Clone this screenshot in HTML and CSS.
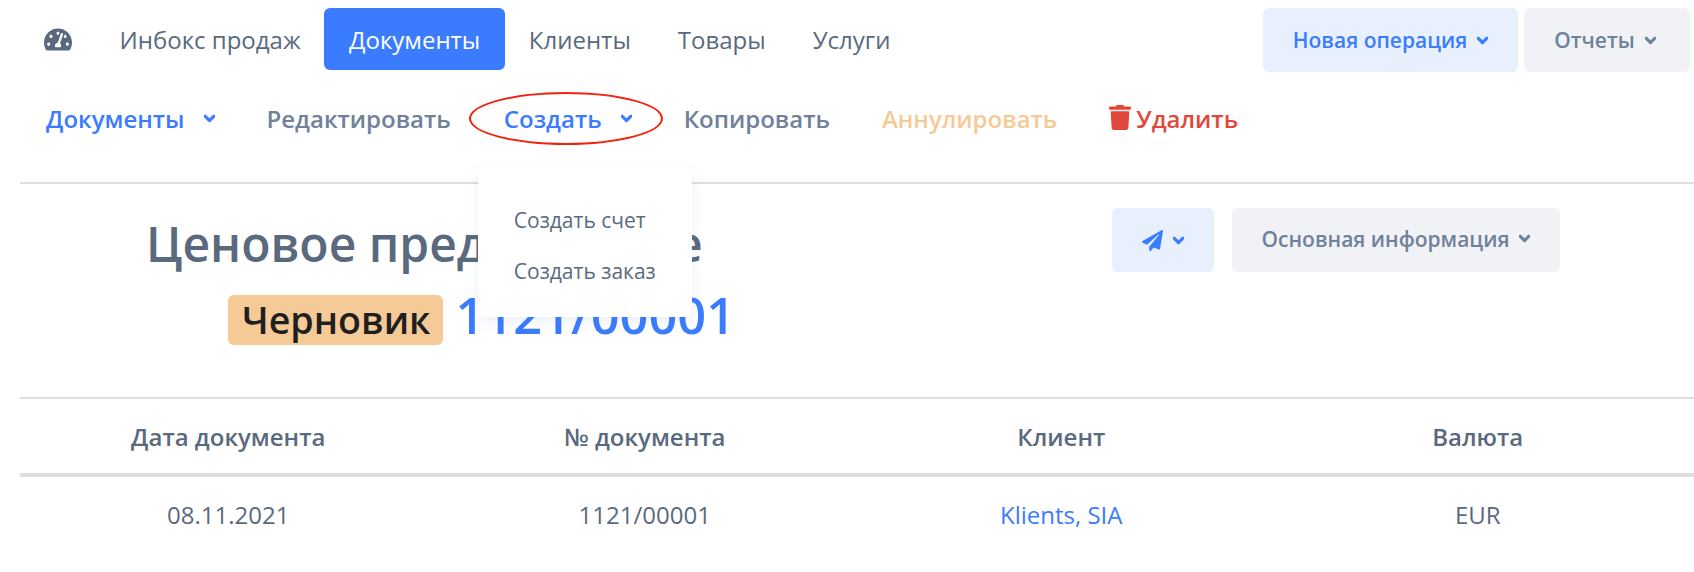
FILE: index.html
```html
<!DOCTYPE html>
<html lang="ru">
<head>
<meta charset="utf-8">
<title>Ценовое предложение</title>
<link rel="stylesheet" href="styles.css">
</head>
<body>
<svg class="sprite" aria-hidden="true">
  <symbol id="chev" viewBox="0 0 448 512"><path d="M207.029 381.476L12.686 187.132c-9.373-9.373-9.373-24.569 0-33.941l22.667-22.667c9.357-9.357 24.522-9.375 33.901-.04L224 284.505l154.745-154.021c9.379-9.335 24.544-9.317 33.901.04l22.667 22.667c9.373 9.373 9.373 24.569 0 33.941L240.971 381.476c-9.373 9.372-24.569 9.372-33.942 0z"/></symbol>
</svg>
<header class="topbar">
  <nav class="nav">
    <a class="nav-icon"><svg viewBox="0 0 576 512" class="gauge"><path d="M288 32C128.94 32 0 160.94 0 320c0 52.8 14.25 102.26 39.06 144.8 5.61 9.62 16.3 15.2 27.44 15.2h443c11.14 0 21.83-5.58 27.44-15.2C561.75 422.26 576 372.8 576 320c0-159.06-128.94-288-288-288zm0 64c14.71 0 26.58 10.13 30.32 23.65-1.11 2.26-2.64 4.23-3.45 6.67l-9.22 27.67c-5.13 3.49-10.97 6.01-17.64 6.01-17.67 0-32-14.33-32-32S270.33 96 288 96zM96 384c-17.67 0-32-14.33-32-32s14.33-32 32-32 32 14.33 32 32-14.33 32-32 32zm48-160c-17.67 0-32-14.33-32-32s14.33-32 32-32 32 14.33 32 32-14.33 32-32 32zm246.77-72.41l-61.33 184C343.13 347.33 352 364.54 352 384c0 11.72-3.38 22.55-8.88 32H232.88c-5.5-9.45-8.88-20.28-8.88-32 0-33.94 26.5-61.43 59.9-63.59l61.34-184.01c4.17-12.56 17.73-19.45 30.36-15.17 12.57 4.19 19.35 17.79 15.17 30.36zm14.66 57.2l15.52-46.55c3.47-1.29 7.13-2.23 11.05-2.23 17.67 0 32 14.33 32 32s-14.33 32-32 32c-11.38-.01-20.89-6.28-26.57-15.22zM480 384c-17.67 0-32-14.33-32-32s14.33-32 32-32 32 14.33 32 32-14.33 32-32 32z"/></svg></a>
    <a class="nav-link">Инбокс продаж</a>
    <a class="nav-link active">Документы</a>
    <a class="nav-link">Клиенты</a>
    <a class="nav-link">Товары</a>
    <a class="nav-link">Услуги</a>
  </nav>
  <div class="top-actions">
    <a class="btn btn-blue btn-op">Новая операция <svg class="chev"><use href="#chev"/></svg></a>
    <a class="btn btn-grey btn-rep">Отчеты <svg class="chev"><use href="#chev"/></svg></a>
  </div>
</header>

<div class="actions">
  <a class="act blue">Документы <svg class="chev"><use href="#chev"/></svg></a>
  <a class="act slate">Редактировать</a>
  <div class="act-wrap">
    <a class="act blue">Создать <svg class="chev"><use href="#chev"/></svg></a>
    <span class="ring"></span>
    <div class="menu">
      <a class="menu-item">Создать счет</a>
      <a class="menu-item">Создать заказ</a>
    </div>
  </div>
  <a class="act slate">Копировать</a>
  <a class="act orange">Аннулировать</a>
  <a class="act red"><svg class="trash" viewBox="0 0 448 512"><path d="M432 32H312l-9.4-18.7A24 24 0 0 0 281.1 0H166.8a23.72 23.72 0 0 0-21.4 13.3L136 32H16A16 16 0 0 0 0 48v32a16 16 0 0 0 16 16h416a16 16 0 0 0 16-16V48a16 16 0 0 0-16-16zM53.2 467a48 48 0 0 0 47.9 45h245.8a48 48 0 0 0 47.9-45L416 128H32z"/></svg>Удалить</a>
</div>

<section class="head">
  <div class="head-left">
    <h1 class="title">Ценовое предложение</h1>
    <div class="status-row">
      <span class="badge">Черновик</span>
      <span class="docno">1121/00001</span>
    </div>
  </div>
  <div class="head-right">
    <a class="btn btn-blue btn-send"><svg class="plane" viewBox="0 0 512 512"><path d="M476 3.2L12.5 270.6c-18.1 10.4-15.8 35.6 2.2 43.2L121 358.4l287.3-253.2c5.5-4.9 13.3 2.6 8.6 8.3L176 407v80.5c0 23.6 28.5 32.9 42.5 15.8L282 426l124.6 52.2c14.2 6 30.4-2.9 33-18.2l72-432C515 7.8 493.3-6.8 476 3.2z"/></svg><svg class="chev"><use href="#chev"/></svg></a>
    <a class="btn btn-grey btn-info">Основная информация <svg class="chev"><use href="#chev"/></svg></a>
  </div>
</section>

<section class="table">
  <div class="row row-head">
    <div>Дата документа</div>
    <div>№ документа</div>
    <div>Клиент</div>
    <div>Валюта</div>
  </div>
  <div class="row row-body">
    <div>08.11.2021</div>
    <div>1121/00001</div>
    <div><a class="link">Klients, SIA</a></div>
    <div>EUR</div>
  </div>
</section>
</body>
</html>
```

FILE: styles.css
```css
* { box-sizing: border-box; }
html, body { margin: 0; padding: 0; }
body {
  background: #fff;
  color: #5a6a7e;
  font-family: "Open Sans", "Noto Sans", sans-serif;
  font-size: 24px;
  height: 572px;
  overflow: hidden;
}
.sprite { display: none; }
a { color: inherit; text-decoration: none; }

.topbar {
  display: flex;
  justify-content: space-between;
  padding: 8px 4px 0 44px;
  height: 72px;
}
.nav { display: flex; align-items: flex-start; }
.nav-icon { display: flex; align-items: center; height: 64px; padding-right: 24px; margin-top: -1px; }
.gauge { width: 28px; height: 25px; fill: #5a6a7e; }
.nav-link {
  display: flex;
  align-items: center;
  height: 62px;
  padding: 0 23.5px;
  color: #5a6a7e;
}
.nav-link.active {
  background: #3b7cff;
  color: #fff;
  border-radius: 6px;
  padding: 0 25px;
}

.top-actions { display: flex; gap: 6px; }
.btn {
  display: flex;
  align-items: center;
  justify-content: center;
  height: 64px;
  border-radius: 6px;
  font-size: 21px;
  font-weight: 600;
}
.btn-blue { background: #e8f0fe; color: #3b7cff; fill: #3b7cff; stroke: #3b7cff; }
.btn-grey { background: #f1f2f5; color: #6f819b; fill: #6f819b; stroke: #6f819b; }
.btn-op { width: 255px; }
.btn-rep { width: 166px; padding-right: 4px; }
.chev { width: 11px; height: 13px; margin-left: 10px; fill: inherit; stroke: inherit; stroke-width: 50; }

.actions {
  display: flex;
  align-items: center;
  gap: 52px;
  height: 56px;
  margin-top: 18px;
  padding-left: 46px;
  font-size: 24px;
  font-weight: 600;
}
.act { display: flex; align-items: center; }
.act .chev { margin-left: 19px; }
.blue { color: #3b7cff; fill: #3b7cff; stroke: #3b7cff; }
.slate { color: #6f819b; }
.orange { color: #f6ca97; }
.red { color: #e2483a; fill: #e2483a; }
.trash { width: 22px; height: 25px; margin: 0 5px 2px 0; stroke: none; }

.act-wrap { position: relative; display: flex; margin-left: 1px; }
.ring {
  position: absolute;
  left: -35px;
  top: -10px;
  width: 194px;
  height: 53px;
  border: 2px solid #f4200c;
  border-radius: 50%;
}
.menu {
  position: absolute;
  left: -26px;
  top: 66px;
  width: 214px;
  height: 149px;
  padding: 27px 36px;
  background: #fff;
  border-radius: 6px;
  box-shadow: 0 4px 14px rgba(70, 100, 200, 0.1);
  z-index: 2;
  font-size: 21px;
  font-weight: 400;
  color: #5a6a7e;
}
.menu-item { display: block; line-height: 51px; white-space: nowrap; }

.head {
  display: flex;
  justify-content: space-between;
  height: 217px;
  margin: 36px 0 0 20px;
  padding: 0 134px 0 126px;
  border-top: 2px solid #dedede;
  border-bottom: 2px solid #dedede;
}
.title {
  margin: 30px 0 0;
  font-size: 48px;
  line-height: 60px;
  font-weight: 600;
  color: #5a6a7e;
  white-space: nowrap;
}
.status-row {
  display: flex;
  align-items: baseline;
  gap: 12px;
  margin: 16px 0 0 82px;
}
.badge {
  display: block;
  height: 50px;
  padding: 0 13px 0 14px;
  line-height: 50px;
  border-radius: 6px;
  background: #f5ca97;
  color: #1f1f1f;
  font-size: 37.6px;
  font-weight: 600;
}
.docno {
  font-size: 50.5px;
  line-height: 50px;
  font-weight: 600;
  color: #3b7cff;
}
.head-right { display: flex; gap: 18px; margin-top: 24px; }
.btn-send { width: 102px; }
.btn-info { width: 328px; padding-bottom: 3px; }
.plane { width: 21px; height: 21px; stroke: none; }

.table { margin-left: 20px; }
.row {
  display: grid;
  grid-template-columns: repeat(4, 1fr);
  align-items: center;
  padding-right: 8px;
  text-align: center;
}
.row-head {
  height: 78px;
  border-bottom: 4px solid #dedede;
  font-size: 24px;
  font-weight: 600;
}
.row-body { height: 74px; font-size: 24px; }
.link { color: #3b7cff; }
```
